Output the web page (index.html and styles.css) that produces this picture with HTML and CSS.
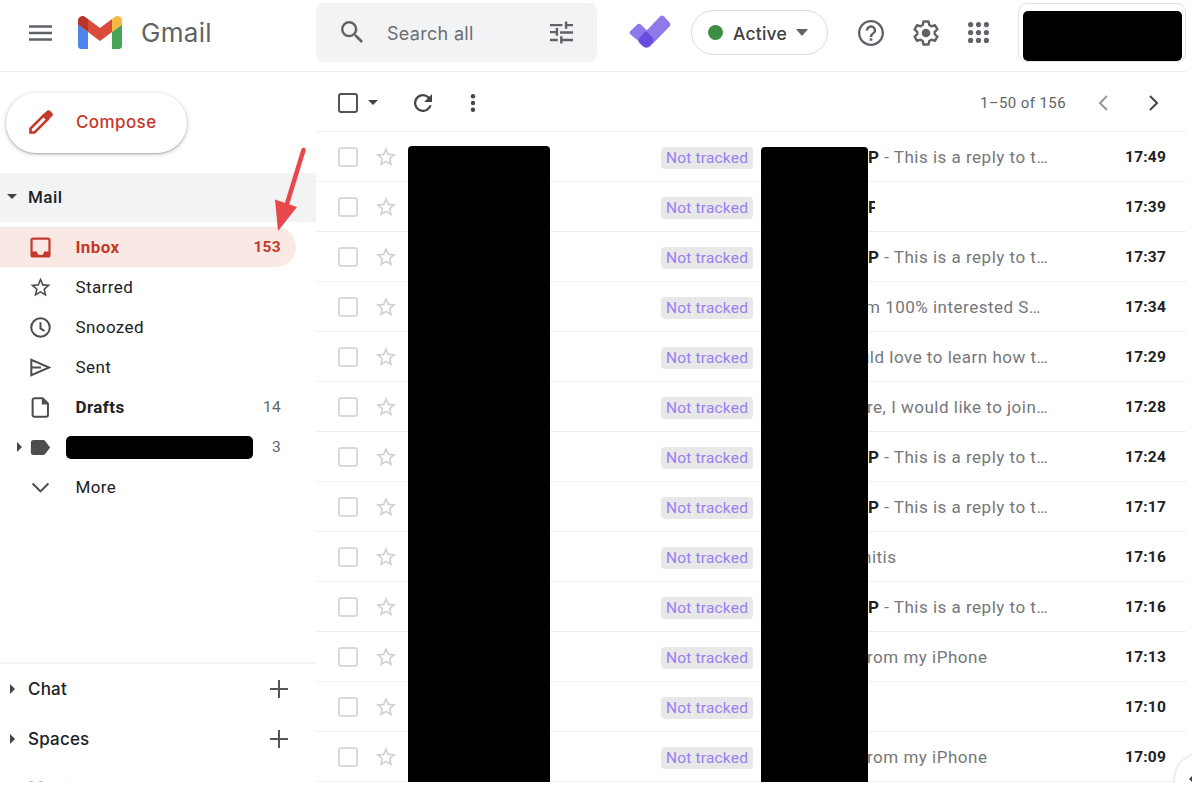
FILE: index.html
```html
<!DOCTYPE html>
<html lang="en">
<head>
    <meta charset="UTF-8">
    <meta name="viewport" content="width=device-width, initial-scale=1.0">
    <title>Gmail - Inbox</title>
    <link rel="stylesheet" href="styles.css">
</head>
<body>

<svg class="symbols" width="0" height="0">
    <symbol id="star" viewBox="0 0 24 24"><path d="M22 9.24l-7.19-.62L12 2 9.19 8.63 2 9.24l5.46 4.73L5.82 21 12 17.27 18.18 21l-1.63-7.03L22 9.24zM12 15.4l-3.76 2.27 1-4.28-3.32-2.88 4.38-.38L12 6.1l1.71 4.04 4.38.38-3.32 2.88 1 4.28L12 15.4z"/></symbol>
</svg>

<div class="app">
    <header class="header">
        <div class="brand">
            <svg class="menu-icon" viewBox="0 0 24 16"><path d="M0 0h24v2.6H0zM0 6.7h24v2.6H0zM0 13.4h24V16H0z"/></svg>
            <svg class="logo" viewBox="52 42 88 66">
                <path fill="#4f83ec" d="M58 108h14V74L52 59v43c0 3.32 2.69 6 6 6"/>
                <path fill="#48a357" d="M120 108h14c3.32 0 6-2.69 6-6V59l-20 15"/>
                <path fill="#f5bb41" d="M120 48v26l20-15v-8c0-7.42-8.47-11.65-14.4-7.2"/>
                <path fill="#da4a3b" d="M72 74V48l24 18 24-18v26L96 92"/>
                <path fill="#b8342b" d="M52 51v8l20 15V48l-5.6-4.2c-5.94-4.45-14.4-.22-14.4 7.2"/>
            </svg>
            <span class="logo-text">Gmail</span>
        </div>
        <div class="search">
            <svg class="search-icon" viewBox="3 3 17.5 17.5"><path d="M15.5 14h-.79l-.28-.27A6.47 6.47 0 0 0 16 9.5 6.5 6.5 0 1 0 9.5 16c1.61 0 3.09-.59 4.23-1.57l.27.28v.79l5 4.99L20.49 19l-4.99-5zm-6 0C7.01 14 5 11.99 5 9.5S7.01 5 9.5 5 14 7.01 14 9.5 11.99 14 9.5 14z"/></svg>
            <span class="search-text">Search all</span>
            <svg class="tune-icon" viewBox="0 0 24 23"><path d="M0 2.6h13v2.5H0zM15.5 0H18v2.6h6v2.5h-6v2.6h-2.5zM6 6.7h2.5v8.2H6v-2.6H0V9.9h6zM10.5 10.2H24v2.5H10.5zM0 18h8v2.5H0zM10.5 15.3H13V18h11v2.5H13V23h-2.5z"/></svg>
        </div>
        <svg class="check-logo" viewBox="0 0 42 34">
            <path fill="#8f79ea" d="M1.500 16 8 9.700q2-1.700 4 0L25 22l-6 9q-2 1-4-.500L1.500 19.500q-2-1.700 0-3.500z"/>
            <path fill="#8f79ea" d="M31 1.500q2-2 4 0l5.500 6q1.500 2 0 4L21.500 31q-3.500 3-7 0-4-4-2.500-9.500z"/>
            <path fill="#6a4be0" d="M15 17.500q2-2 4 0l5 5.500q1.500 2 0 4L20.500 31q-3.500 3-7 0l-3-3q-2-2 0-5z"/>
        </svg>
        <div class="status">
            <span class="status-dot"></span>
            <span class="status-text">Active</span>
            <span class="caret-down"></span>
        </div>
        <div class="header-icons">
            <svg class="help-icon" viewBox="2 2 20 20"><path d="M11 18h2v-2h-2v2zm1-16C6.48 2 2 6.480 2 12s4.480 10 10 10 10-4.480 10-10S17.520 2 12 2zm0 18.200c-4.520 0-8.200-3.680-8.200-8.200S7.480 3.800 12 3.800s8.200 3.680 8.200 8.200-3.680 8.200-8.200 8.200zM12 6c-2.210 0-4 1.790-4 4h1.900c0-1.100.9-2.100 2.100-2.100s2.100.9 2.100 2.100c0 2-3.050 1.750-3.050 5H13c0-2.250 3-2.500 3-5 0-2.210-1.790-4-4-4z"/></svg>
            <svg class="gear-icon" viewBox="0 0 26 26">
                <path class="gear-ring" d="M10.500 1.500h5l.8 3.500 2.200 1.300 3.400-1.200 2.500 4.300-2.700 2.400v2.400l2.700 2.400-2.500 4.300-3.400-1.200-2.200 1.300-.8 3.500h-5L9.700 21l-2.200-1.300-3.400 1.200-2.500-4.300 2.700-2.400v-2.400L1.600 9.400l2.500-4.300 3.400 1.200L9.700 5z"/>
                <circle cx="13" cy="13" r="4.300"/>
            </svg>
            <svg class="apps-icon" viewBox="0 0 21 21">
                <circle cx="2.600" cy="2.600" r="2.600"/><circle cx="10.500" cy="2.600" r="2.600"/><circle cx="18.400" cy="2.600" r="2.600"/>
                <circle cx="2.600" cy="10.500" r="2.600"/><circle cx="10.500" cy="10.500" r="2.600"/><circle cx="18.400" cy="10.500" r="2.600"/>
                <circle cx="2.600" cy="18.400" r="2.600"/><circle cx="10.500" cy="18.400" r="2.600"/><circle cx="18.400" cy="18.400" r="2.600"/>
            </svg>
        </div>
        <div class="account"><div class="account-name"></div></div>
    </header>

    <div class="body">
        <aside class="sidebar">
            <button class="compose">
                <svg class="pencil" viewBox="0 0 24 24"><path class="pencil-line" d="M1.500 22.500v-4L14.500 5.500l4 4-13 13z"/><path d="M13.500 5 18 .8q1.500-1.300 3 0l2.200 2.200q1.300 1.500 0 3L19 10.500z"/></svg>
                <span>Compose</span>
            </button>

            <div class="section section-mail"><span class="caret-down small"></span>Mail</div>

            <ul class="nav">
                <li class="nav-item active">
                    <svg viewBox="0 0 24 24"><path d="M20.500 .5h-17a3 3 0 0 0-3 3v17a3 3 0 0 0 3 3h17a3 3 0 0 0 3-3v-17a3 3 0 0 0-3-3zM21 16.500h-5a4 4 0 0 1-8 0H3V3h18z"/></svg>
                    <span>Inbox</span><span class="count">153</span>
                </li>
                <li class="nav-item">
                    <svg viewBox="1.500 1.500 21 21"><use href="#star" width="24" height="24"/></svg>
                    <span>Starred</span>
                </li>
                <li class="nav-item">
                    <svg viewBox="0 0 24 24"><circle class="line" cx="12" cy="12" r="10.600"/><path class="line" d="M12 6v7l4.500 3"/></svg>
                    <span>Snoozed</span>
                </li>
                <li class="nav-item">
                    <svg viewBox="0 0 24 24"><path class="line" d="M1.500 3.300v17.400L22 12zM1.500 12h11"/></svg>
                    <span>Sent</span>
                </li>
                <li class="nav-item bold">
                    <svg viewBox="0 0 24 24"><path class="line" d="M5 1.400h9.500l6 6v13.200a2 2 0 0 1-2 2H5a2 2 0 0 1-2-2V3.400a2 2 0 0 1 2-2z"/><path d="M13.500 1.500v7h7z"/></svg>
                    <span>Drafts</span><span class="count">14</span>
                </li>
                <li class="nav-item label">
                    <span class="caret-right"></span>
                    <svg viewBox="0 0 24 24"><path d="M4 3.500h11q1.700 0 2.600 1.300L23 12l-5.400 7.200q-.9 1.300-2.600 1.300H4a3 3 0 0 1-3-3v-11a3 3 0 0 1 3-3z"/></svg>
                    <span class="label-name"></span><span class="count">3</span>
                </li>
                <li class="nav-item">
                    <svg viewBox="0 0 24 24"><path class="line" d="m3 7.500 9 9 9-9"/></svg>
                    <span>More</span>
                </li>
            </ul>

            <div class="bottom">
                <div class="section"><span class="caret-right"></span>Chat<svg class="plus" viewBox="0 0 18 18"><path d="M9 0v18M0 9h18"/></svg></div>
                <div class="section"><span class="caret-right"></span>Spaces<svg class="plus" viewBox="0 0 18 18"><path d="M9 0v18M0 9h18"/></svg></div>
                <div class="section meet">Meet</div>
            </div>
        </aside>

        <main class="main">
            <div class="toolbar">
                <span class="checkbox dark"></span>
                <span class="caret-down small"></span>
                <svg class="refresh" viewBox="4 4 16 16"><path d="M17.650 6.350A7.960 7.960 0 0 0 12 4a8 8 0 1 0 7.730 10h-2.080A6 6 0 1 1 12 6c1.660 0 3.140.690 4.220 1.780L13 11h7V4l-2.350 2.350z"/></svg>
                <svg class="dots" viewBox="0 0 6 18"><circle cx="3" cy="2.200" r="2.200"/><circle cx="3" cy="9" r="2.200"/><circle cx="3" cy="15.800" r="2.200"/></svg>
                <span class="pages">1–50 of 156</span>
                <svg class="arrow disabled" viewBox="0 0 10 16"><path d="M9 1 2 8l7 7"/></svg>
                <svg class="arrow" viewBox="0 0 10 16"><path d="m1 1 7 7-7 7"/></svg>
            </div>

            <div class="mails">
                <div class="mail">
                    <span class="checkbox"></span><svg class="star"><use href="#star"/></svg>
                    <span class="tag">Not tracked</span>
                    <span class="subject"><b>P</b> - This is a reply to t…</span>
                    <span class="time">17:49</span>
                </div>
                <div class="mail">
                    <span class="checkbox"></span><svg class="star"><use href="#star"/></svg>
                    <span class="tag">Not tracked</span>
                    <span class="subject cut"><b>P</b></span>
                    <span class="time">17:39</span>
                </div>
                <div class="mail">
                    <span class="checkbox"></span><svg class="star"><use href="#star"/></svg>
                    <span class="tag">Not tracked</span>
                    <span class="subject"><b>P</b> - This is a reply to t…</span>
                    <span class="time">17:37</span>
                </div>
                <div class="mail">
                    <span class="checkbox"></span><svg class="star"><use href="#star"/></svg>
                    <span class="tag">Not tracked</span>
                    <span class="subject under-m">m 100% interested S…</span>
                    <span class="time">17:34</span>
                </div>
                <div class="mail">
                    <span class="checkbox"></span><svg class="star"><use href="#star"/></svg>
                    <span class="tag">Not tracked</span>
                    <span class="subject under-u">uld love to learn how t…</span>
                    <span class="time">17:29</span>
                </div>
                <div class="mail">
                    <span class="checkbox"></span><svg class="star"><use href="#star"/></svg>
                    <span class="tag">Not tracked</span>
                    <span class="subject under-r">re, I would like to join…</span>
                    <span class="time">17:28</span>
                </div>
                <div class="mail">
                    <span class="checkbox"></span><svg class="star"><use href="#star"/></svg>
                    <span class="tag">Not tracked</span>
                    <span class="subject"><b>P</b> - This is a reply to t…</span>
                    <span class="time">17:24</span>
                </div>
                <div class="mail">
                    <span class="checkbox"></span><svg class="star"><use href="#star"/></svg>
                    <span class="tag">Not tracked</span>
                    <span class="subject"><b>P</b> - This is a reply to t…</span>
                    <span class="time">17:17</span>
                </div>
                <div class="mail">
                    <span class="checkbox"></span><svg class="star"><use href="#star"/></svg>
                    <span class="tag">Not tracked</span>
                    <span class="subject under-n">nitis</span>
                    <span class="time">17:16</span>
                </div>
                <div class="mail">
                    <span class="checkbox"></span><svg class="star"><use href="#star"/></svg>
                    <span class="tag">Not tracked</span>
                    <span class="subject"><b>P</b> - This is a reply to t…</span>
                    <span class="time">17:16</span>
                </div>
                <div class="mail">
                    <span class="checkbox"></span><svg class="star"><use href="#star"/></svg>
                    <span class="tag">Not tracked</span>
                    <span class="subject under-r">rom my iPhone</span>
                    <span class="time">17:13</span>
                </div>
                <div class="mail">
                    <span class="checkbox"></span><svg class="star"><use href="#star"/></svg>
                    <span class="tag">Not tracked</span>
                    <span class="subject"></span>
                    <span class="time">17:10</span>
                </div>
                <div class="mail">
                    <span class="checkbox"></span><svg class="star"><use href="#star"/></svg>
                    <span class="tag">Not tracked</span>
                    <span class="subject under-r">rom my iPhone</span>
                    <span class="time">17:09</span>
                </div>
                <div class="cover cover-sender"></div>
                <div class="cover cover-subject"></div>
            </div>
        </main>
    </div>

    <!-- Arrow pointing at the unread count -->
    <svg class="pointer" viewBox="0 0 32 86"><path class="pointer-line" d="M29.500 3 12 60"/><path d="M1 52.500 23 60 4 84z"/></svg>

    <!-- Side panel toggle -->
    <div class="panel-toggle"><span class="caret-left"></span></div>
</div>

</body>
</html>
```
FILE: styles.css
```css
* {
    box-sizing: border-box;
}
body {
    margin: 0;
    background: #fff;
    font-family: Roboto, "Liberation Sans", sans-serif;
    color: #202124;
}
svg {
    display: block;
    flex: none;
    fill: #5f6368;
}
.symbols {
    position: absolute;
}
.app {
    position: relative;
    display: flex;
    flex-direction: column;
    width: 1192px;
    height: 782px;
    overflow: hidden;
}

/* Header */
.header {
    display: flex;
    align-items: flex-start;
    flex: none;
    width: 1186px;
    height: 72px;
    border-bottom: 1px solid #eceded;
}
.brand {
    display: flex;
    align-items: center;
    flex: none;
    width: 316px;
    height: 65px;
    padding-left: 29px;
}
.menu-icon {
    width: 23px;
    height: 16px;
}
.logo {
    width: 44px;
    height: 33px;
    margin-left: 26px;
}
.logo-text {
    margin-left: 19px;
    font-family: Inter, sans-serif;
    font-size: 26px;
    letter-spacing: 0.3px;
    color: #5f6368;
}
.search {
    display: flex;
    align-items: center;
    flex: none;
    width: 281px;
    height: 59px;
    margin-top: 3px;
    padding: 0 24px 0 25px;
    border-radius: 8px;
    background: #f1f3f4;
}
.search-icon {
    width: 22px;
    height: 22px;
    margin-bottom: 2px;
}
.search-text {
    margin: 2px 0 0 24px;
    font-family: Inter, sans-serif;
    font-size: 18px;
    letter-spacing: 0.3px;
    color: #6b6f73;
}
.tune-icon {
    width: 23px;
    height: 23px;
    margin-left: auto;
}
.check-logo {
    width: 42px;
    height: 34px;
    margin: 15px 20px 0 32px;
}
.status {
    display: flex;
    align-items: center;
    flex: none;
    width: 137px;
    height: 45px;
    margin-top: 10px;
    padding-left: 16px;
    border: 1px solid #dadce0;
    border-radius: 23px;
}
.status-dot {
    width: 15px;
    height: 15px;
    border-radius: 50%;
    background: #3e8e41;
}
.status-text {
    margin: 2px 9px 0 10px;
    font-family: Inter, sans-serif;
    font-size: 17.5px;
    font-weight: 500;
    letter-spacing: 0.2px;
    color: #3c4043;
}
.caret-down {
    border: 6px solid transparent;
    border-top: 7px solid #5f6368;
    border-bottom: 0;
}
.caret-down.small {
    border-width: 5px 5px 0;
    border-top-color: #444;
}
.caret-right {
    border: 5px solid transparent;
    border-left: 5px solid #444;
    border-right: 0;
}
.header-icons {
    display: flex;
    align-items: center;
    height: 65px;
    margin-left: 30px;
}
.help-icon {
    width: 26px;
    height: 26px;
}
.gear-icon {
    width: 26px;
    height: 26px;
    margin-left: 29px;
}
.gear-ring {
    fill: none;
    stroke: #5f6368;
    stroke-width: 2.4;
    stroke-linejoin: round;
}
.apps-icon {
    width: 21px;
    height: 21px;
    margin-left: 29px;
}
.account {
    flex: none;
    width: 168px;
    height: 59px;
    margin: 3px 0 0 29px;
    padding: 7px 3px 0 4px;
    border: 1px solid #e0e1e3;
    border-radius: 9px;
}
.account-name {
    height: 50px;
    border-radius: 5px;
    background: #000;
}

/* Sidebar */
.body {
    display: flex;
    flex: 1;
    min-height: 0;
}
.sidebar {
    display: flex;
    flex-direction: column;
    flex: none;
    width: 316px;
}
.compose {
    display: flex;
    align-items: center;
    width: 181px;
    height: 60px;
    margin: 21px 0 20px 6px;
    padding: 0 0 2px 23px;
    border: 0;
    border-radius: 30px;
    background: #fff;
    box-shadow: 0 1px 2px rgba(60, 64, 67, 0.35), 0 1px 4px 1px rgba(60, 64, 67, 0.15);
    font-family: Inter, sans-serif;
    font-size: 17px;
    font-weight: 500;
    letter-spacing: 0.4px;
    color: #c5392b;
}
.pencil {
    width: 24px;
    height: 24px;
    margin-right: 23px;
    fill: #c5392b;
}
.pencil-line {
    fill: none;
    stroke: #c5392b;
    stroke-width: 2.6;
}
.section {
    display: flex;
    align-items: center;
    height: 50px;
    padding-left: 10px;
    font-family: Inter, sans-serif;
    font-size: 17px;
    font-weight: 500;
    letter-spacing: 0.2px;
}
.section .caret-right {
    margin-right: 13px;
}
.section-mail {
    height: 49px;
    padding: 0 0 2px 7px;
    background: #f1f3f4;
    font-family: Roboto, sans-serif;
    letter-spacing: 0.5px;
}
.section-mail .caret-down {
    margin-right: 11px;
}
.nav {
    margin: 5px 0 0;
    padding: 0;
    list-style: none;
}
.nav-item {
    display: flex;
    align-items: center;
    width: 296px;
    height: 40px;
    padding: 0 15px 0 30px;
    font-size: 17px;
    letter-spacing: 0.4px;
}
.nav-item svg {
    width: 21px;
    height: 21px;
    margin-right: 24.5px;
    fill: #4d4d4d;
}
.nav-item .line {
    fill: none;
    stroke: #4d4d4d;
    stroke-width: 2.3;
}
.nav-item.active {
    border-radius: 0 20px 20px 0;
    background: #fae8e5;
    font-weight: 700;
    color: #c5392b;
}
.nav-item.active svg {
    fill: #c5392b;
}
.nav-item.bold {
    font-weight: 700;
}
.count {
    margin-left: auto;
    font-size: 15.5px;
    letter-spacing: 0.3px;
    color: #5f6368;
}
.active .count {
    color: #c5392b;
}
.bold .count {
    font-weight: 400;
}
.nav-item.label {
    padding-left: 17px;
}
.label .caret-right {
    margin-right: 8px;
}
.nav-item.label svg {
    margin-right: 15px;
}
.label-name {
    width: 187px;
    height: 23px;
    border-radius: 5px;
    background: #000;
}
.bottom {
    flex: none;
    margin-top: auto;
    height: 120px;
    overflow: hidden;
    border-top: 2px solid #f3f4f4;
}
.plus {
    width: 18px;
    height: 18px;
    margin: 0 28px 0 auto;
    stroke: #555;
    stroke-width: 2;
}
.meet {
    height: 48px;
    padding-left: 28px;
    color: #bbb;
}

/* Mail list */
.main {
    display: flex;
    flex-direction: column;
    width: 870px;
}
.toolbar {
    display: flex;
    align-items: center;
    flex: none;
    height: 60px;
    padding: 2px 27px 0 22px;
    border-bottom: 1px solid #eef0f0;
}
.toolbar .caret-down {
    margin-left: 10px;
}
.refresh {
    width: 18px;
    height: 18px;
    margin-left: 36px;
    fill: #444;
}
.dots {
    width: 6px;
    height: 18px;
    margin-left: 38px;
    fill: #444;
}
.pages {
    margin-left: auto;
    font-size: 15px;
    letter-spacing: 0.4px;
    color: #5f6368;
}
.arrow {
    width: 10px;
    height: 16px;
    margin-left: 41px;
    fill: none;
    stroke: #444;
    stroke-width: 2;
}
.arrow.disabled {
    margin-left: 32px;
    stroke: #999;
}
.checkbox {
    flex: none;
    width: 20px;
    height: 20px;
    border: 2px solid #dadada;
    border-radius: 3px;
}
.checkbox.dark {
    border-color: #555;
}
.mails {
    position: relative;
}
.mail {
    display: flex;
    align-items: center;
    height: 50px;
    padding: 0 20px 0 22px;
    border-bottom: 1px solid #eceeef;
}
.star {
    width: 24px;
    height: 24px;
    margin: 0 263px 0 16px;
    fill: #d0d0d0;
}
.tag {
    flex: none;
    width: 92px;
    height: 22px;
    margin-top: 3px;
    border-radius: 4px;
    background: #e8e8e9;
    font-size: 15.5px;
    line-height: 22px;
    letter-spacing: 0.2px;
    text-align: center;
    color: #9a7fee;
}
.subject {
    margin-left: 115px;
    overflow: hidden;
    font-size: 17px;
    letter-spacing: 0.5px;
    white-space: nowrap;
    color: #757779;
}
.subject b {
    color: #202124;
}
.subject.cut {
    width: 7px;
}
.subject.under-m {
    margin-left: 112px;
}
.subject.under-u {
    margin-left: 107px;
}
.subject.under-n {
    margin-left: 109px;
}
.subject.under-r {
    margin-left: 114px;
}
.time {
    margin-left: auto;
    font-size: 15.5px;
    font-weight: 700;
    letter-spacing: 0.2px;
}
/* Blacked out sender and subject columns */
.cover {
    position: absolute;
    bottom: 0;
    border-radius: 4px 4px 0 0;
    background: #000;
}
.cover-sender {
    top: 14px;
    left: 92px;
    width: 142px;
}
.cover-subject {
    top: 15px;
    left: 445px;
    width: 107px;
}

.pointer {
    position: absolute;
    top: 147px;
    left: 274px;
    width: 32px;
    height: 86px;
    fill: #e8474c;
}
.pointer-line {
    stroke: #e8474c;
    stroke-width: 4.5;
    stroke-linecap: round;
}
.panel-toggle {
    position: absolute;
    top: 754px;
    left: 1175px;
    width: 50px;
    height: 50px;
    padding: 21px 0 0 14px;
    border-radius: 50%;
    background: #fff;
    box-shadow: 0 0 3px rgba(60, 64, 67, 0.3);
}
.caret-left {
    display: block;
    width: 0;
    border: 4px solid transparent;
    border-right: 4px solid #444;
    border-left: 0;
}
```
